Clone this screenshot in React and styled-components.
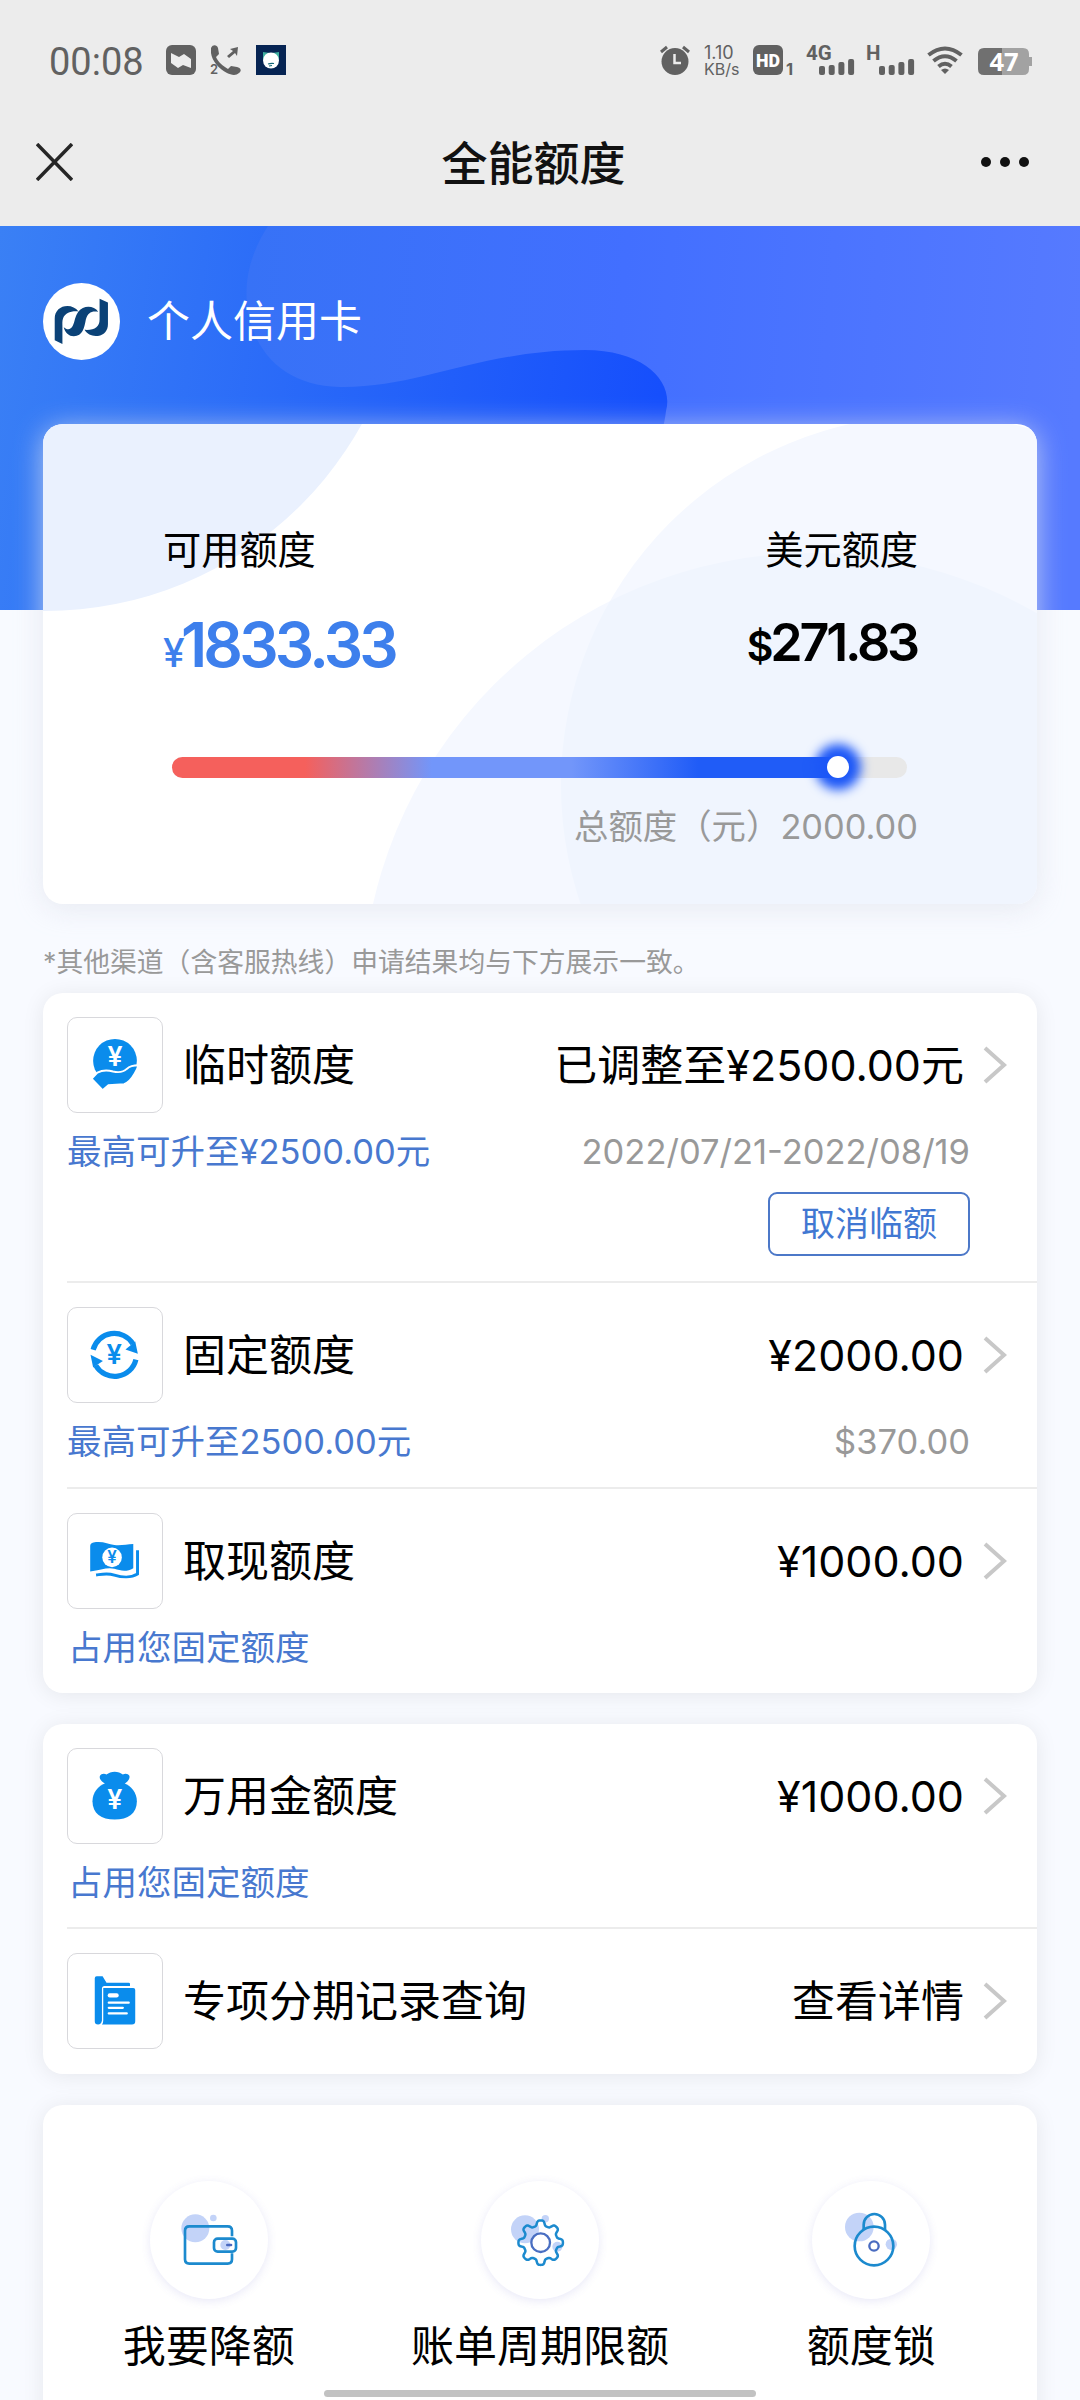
import React from 'react'
import styled, { createGlobalStyle } from 'styled-components'

const GlobalStyle = createGlobalStyle`
  * {
    box-sizing: border-box;
  }
  body {
    margin: 0;
    background: #f8faff;
    color: #000;
    font-family: Inter, "Noto Sans CJK SC", sans-serif;
  }
`

const Page = styled.div`
  position: relative;
  width: 1080px;
  height: 2400px;
  overflow: hidden;
  display: flex;
  flex-direction: column;
`

const TopBar = styled.header`
  height: 226px;
  flex: none;
  background: #ececec;
`

const StatusBar = styled.div`
  display: flex;
  justify-content: space-between;
  height: 98px;
  padding: 42px 48px 0 49px;
  color: #616161;
`

const StatusGroup = styled.div`
  display: flex;
  align-items: flex-start;
`

const Clock = styled.span`
  width: 117px;
  font: 38px/41px Roboto, sans-serif;
  white-space: nowrap;
`

const StatusIcon = styled.svg`
  display: block;
  flex: none;
  margin: 3px ${p => p.$gap || 0}px 0 0;
  overflow: visible;
`

const Speed = styled.div`
  width: 49px;
  padding-top: 2px;
  font-size: 18px;
  line-height: 17px;
`

const SpeedUnit = styled.div`
  font-size: 16px;
`

const NavBar = styled.div`
  display: grid;
  grid-template-columns: 1fr auto 1fr;
  align-items: center;
  height: 128px;
  padding: 0 51px 0 36px;
`

const NavTitle = styled.h1`
  margin: 0;
  padding: 2px 0 0 2px;
  font-size: 46px;
  font-weight: 500;
  line-height: 64px;
  color: #111;
`

const More = styled.div`
  display: flex;
  justify-content: flex-end;
  gap: 9px;

  i {
    width: 10px;
    height: 10px;
    border-radius: 50%;
    background: #111;
  }
`

const Hero = styled.section`
  position: relative;
  height: 384px;
  flex: none;
  padding: 57px 43px 0;
`

const HeroArt = styled.svg`
  position: absolute;
  inset: 0;
`

const Account = styled.div`
  position: relative;
  display: flex;
  align-items: center;
  gap: 27px;
  color: #fff;
  font-size: 43px;
  line-height: 77px;
`

const Main = styled.main`
  position: relative;
  display: flex;
  flex-direction: column;
  margin: -186px 43px 0;
`

const LimitCard = styled.section`
  position: relative;
  height: 480px;
  padding: 98px 119px 0 120px;
  border-radius: 20px;
  background: #fff;
  box-shadow: 0 4px 28px rgba(224, 228, 236, 0.75);
`

const CardArt = styled.svg`
  position: absolute;
  inset: 0;
  border-radius: 20px;
`

const Limits = styled.div`
  position: relative;
  display: flex;
  justify-content: space-between;
`

const Limit = styled.div`
  display: flex;
  flex-direction: column;
  align-items: ${p => (p.$end ? 'flex-end' : 'flex-start')};
`

const LimitLabel = styled.span`
  font-size: 38.2px;
  line-height: 57px;
`

const Amount = styled.strong`
  display: flex;
  align-items: baseline;
  height: 84px;
  margin: ${p => (p.$small ? '26px 1px 0 0' : '28px 0 0')};
  font-size: ${p => (p.$small ? 52 : 62)}px;
  font-weight: 600;
  line-height: 76px;
  letter-spacing: ${p => (p.$small ? -3.2 : -3.8)}px;
  color: ${p => (p.$small ? '#000' : '#3d7fec')};

  small {
    font-size: ${p => (p.$small ? 41 : 39)}px;
    font-weight: ${p => (p.$small ? 600 : 500)};
  }
`

const Track = styled.div`
  position: relative;
  width: 735px;
  height: 21px;
  margin: 66px 0 0 9px;
  border-radius: 11px;
  background: #e8e8e8;
`

const Fill = styled.div`
  height: 100%;
  border-radius: 11px 0 0 11px;
  background: linear-gradient(90deg, #f5605c 20%, #7296fa 39%, #7296fa 60%, #205cf7 79%);
`

const Knob = styled.i`
  position: absolute;
  top: -1px;
  width: 22px;
  height: 22px;
  margin-left: -11px;
  border-radius: 50%;
  background: #fff;
  box-shadow: 0 0 11px 12px #1c57f7;
`

const Total = styled.div`
  position: relative;
  margin-top: 23px;
  text-align: right;
  font-size: 34.4px;
  line-height: 52px;
  color: #999;
`

const Note = styled.p`
  margin: 38px 0 11px;
  font-size: 26.8px;
  line-height: 40px;
  color: #999;
  white-space: nowrap;
`

const Card = styled.section`
  margin-bottom: 31px;
  padding-left: 24px;
  border-radius: 20px;
  background: #fff;
  box-shadow: 0 2px 22px rgba(0, 0, 0, 0.08);
`

const Row = styled.div`
  padding: 24px 0 ${p => p.$bottom || 22}px;

  & + & {
    border-top: 2px solid #ececec;
  }
`

const RowMain = styled.div`
  display: flex;
  align-items: center;
  height: 96px;
  padding-right: 29px;
`

const IconBox = styled.svg`
  flex: none;
  border: 1px solid #d8d8dc;
  border-radius: 10px;
`

const RowTitle = styled.span`
  margin-left: 20px;
  font-size: 43px;
  line-height: 60px;
`

const RowValue = styled.span`
  margin: 0 19px 0 auto;
  font-size: 43px;
  line-height: 60px;
`

const RowSub = styled.div`
  display: flex;
  justify-content: space-between;
  padding: 16px 67px 0 ${p => (p.$indent ? 1 : 0)}px;
  font-size: 34.5px;
  line-height: 46px;
  color: #4878cf;

  span:last-child:not(:first-child) {
    color: #999;
  }
`

const OutlineButton = styled.button`
  display: block;
  width: 202px;
  height: 64px;
  margin: 17px 67px 0 auto;
  padding: 0 0 5px;
  border: 2px solid #4c78c8;
  border-radius: 9px;
  background: #fff;
  color: #4178d2;
  font: inherit;
  font-size: 34px;
`

const Actions = styled(Card)`
  display: grid;
  grid-template-columns: repeat(3, 1fr);
  height: 340px;
  padding: 76px 0 0;
`

const Action = styled.div`
  display: flex;
  flex-direction: column;
  align-items: center;
  gap: 17px;
  font-size: 43px;
  line-height: 60px;
`

const Round = styled.svg`
  border-radius: 50%;
  box-shadow: 0 2px 10px rgba(90, 90, 200, 0.14);
`

const HomeIndicator = styled.i`
  position: absolute;
  left: 324px;
  bottom: 3px;
  width: 432px;
  height: 7px;
  border-radius: 4px;
  background: #c2c2c2;
`

const BLUE = '#0a8cec'

const Yen = ({ x, y, size, fill = '#fff' }) => (
  <text x={x} y={y} fontSize={size} fontWeight="600" textAnchor="middle" fill={fill}>¥</text>
)

const icons = {
  hand: (
    <>
      <circle cx="144" cy="131" r="67" fill={BLUE} />
      <Yen x="144" y="147" size="82" />
      <path
        d="M72 186L90 167Q112 156 138 164Q166 170 180 156Q192 145 216 145Q212 158 204 171Q190 196 172 203L124 206L106 221Z"
        fill={BLUE}
        stroke="#fff"
        strokeWidth="6"
      />
    </>
  ),
  cycle: (
    <>
      <path d="M77 128A67 67 0 0 1 199 110" fill="none" stroke={BLUE} strokeWidth="16" />
      <path d="M208 158A67 67 0 0 1 85 176" fill="none" stroke={BLUE} strokeWidth="16" />
      <path d="M206 103L214 140L176 127Z M77 182L69 143L107 162Z" fill={BLUE} />
      <Yen x="142" y="173" size="84" fill={BLUE} />
    </>
  ),
  cash: (
    <>
      <path d="M68 98Q68 89 78 87C106 82 122 92 142 95S180 92 200 92V166C180 178 162 174 142 168S100 172 68 176Z" fill={BLUE} />
      <path d="M213 111V184C194 196 164 194 142 187S106 184 86 187" fill="none" stroke={BLUE} strokeWidth="9" />
      <circle cx="135" cy="133" r="30" fill="#fff" />
      <Yen x="135" y="151" size="52" fill={BLUE} />
    </>
  ),
  bag: (
    <>
      <path d="M118 110C104 100 94 92 98 82C101 75 112 74 118 78C124 74 134 70 143 70S162 74 168 78C176 74 185 76 188 82C191 92 182 100 170 110Z" fill={BLUE} />
      <path d="M116 104H170C194 112 211 134 211 160C211 198 184 216 143 216S75 198 75 160C75 134 92 112 116 104Z" fill={BLUE} />
      <Yen x="143" y="184" size="82" />
    </>
  ),
  folder: (
    <>
      <path d="M82 74Q82 68 88 68H106L118 88H186Q190 88 190 92V98H112Q104 98 104 106V204Q102 216 92 216Q82 216 82 206Z" fill={BLUE} />
      <path d="M108 104H200Q206 104 206 110V206Q206 216 196 216H104Q108 212 108 204Z" fill={BLUE} />
      <path d="M128 127H149" stroke="#fff" strokeWidth="13" strokeLinecap="round" />
      <path d="M125 149H186M125 165H168M125 182H180" stroke="#fff" strokeWidth="7" strokeLinecap="round" />
    </>
  ),
}

// eight soft teeth around the hub
const gearPath = (cx, cy) =>
  Array.from({ length: 160 }, (_, i) => {
    const a = (i / 160) * Math.PI * 2
    const r = 59 + 8 * Math.tanh(Math.cos(a * 8) * 2)
    return `${i ? 'L' : 'M'}${(cx + r * Math.sin(a)).toFixed(1)} ${(cy - r * Math.cos(a)).toFixed(1)}`
  }).join('') + 'Z'

const LINE = '#1c8ace'
const PALE = '#c3d3f8'

const actionIcons = {
  wallet: (
    <>
      <circle cx="136" cy="142" r="42" fill={PALE} />
      <circle cx="190" cy="111" r="10" fill={PALE} />
      <path d="M246 166V149Q246 136 233 136H118Q105 136 105 149V235Q105 248 118 248H233Q246 248 246 235V217" fill="none" stroke={LINE} strokeWidth="8" />
      <circle cx="226" cy="192" r="15" fill={PALE} />
      <rect x="192" y="173" width="66" height="39" rx="11" fill="none" stroke={LINE} strokeWidth="8" />
      <path d="M232 192H243" stroke="#4a68bf" strokeWidth="8" strokeLinecap="round" />
    </>
  ),
  gear: (
    <>
      <circle cx="132" cy="145" r="42" fill={PALE} />
      <circle cx="193" cy="113" r="11" fill={PALE} />
      <circle cx="229" cy="197" r="15" fill={PALE} />
      <path d={gearPath(179, 185)} fill="none" stroke={LINE} strokeWidth="7.500" strokeLinejoin="round" />
      <circle cx="179" cy="185" r="28" fill="#fff" stroke="#4a6fc2" strokeWidth="7" />
    </>
  ),
  lock: (
    <>
      <circle cx="142" cy="138" r="43" fill={PALE} />
      <circle cx="238" cy="190" r="17" fill={PALE} />
      <path d="M155 147V131A32 32 0 0 1 219 131V147" fill="none" stroke={LINE} strokeWidth="8" />
      <circle cx="186" cy="195" r="58" fill="none" stroke={LINE} strokeWidth="8" />
      <circle cx="186" cy="195" r="14" fill="#fff" stroke="#4a6cc0" strokeWidth="7" />
    </>
  ),
}

const Bars = ({ label, width }) => (
  <StatusIcon width={width} height="30" $gap={13} fill="currentColor">
    <text x="-1" y="15" fontFamily="Roboto" fontSize="20.500" fontWeight="700">{label}</text>
    {[9, 10, 13, 16].map((h, i) => (
      <rect key={i} x={width - 35 + i * 9.7} y={30 - h} width="6" height={h} rx="2" />
    ))}
  </StatusIcon>
)

const Chevron = () => (
  <svg width="25" height="38" fill="none" stroke="#c8c8c8" strokeWidth="4">
    <path d="M2 2L21 19L2 36" />
  </svg>
)

const Item = ({ icon, title, value, sub, extra, indent, bottom, children }) => (
  <Row $bottom={bottom}>
    <RowMain>
      <IconBox width="96" height="96" viewBox="0 0 288 288">{icons[icon]}</IconBox>
      <RowTitle>{title}</RowTitle>
      <RowValue>{value}</RowValue>
      <Chevron />
    </RowMain>
    {sub && (
      <RowSub $indent={indent}>
        <span>{sub}</span>
        {extra && <span>{extra}</span>}
      </RowSub>
    )}
    {children}
  </Row>
)

const Status = () => (
  <StatusBar>
    <StatusGroup>
      <Clock>00:08</Clock>
      <StatusIcon width="30" height="30" $gap={14}>
        <rect width="30" height="30" rx="6" fill="#616161" />
        <path d="M5 8L13 12L18 9L25 14V23L17 20L12 23L5 18Z" fill="#ececec" />
      </StatusIcon>
      <StatusIcon width="31" height="30" $gap={15} fill="currentColor">
        <path d="M1 3C3 -1 7 0 8 3L9 9L6 12C8 17 13 21 18 24L21 21L27 22C31 23 32 26 29 28C26 31 21 30 17 28C9 24 2 16 1 8Z" />
        <path d="M17 11L23 6L20 4L28 2L27 11L25 8L19 13Z" />
        <text x="0" y="29" fontSize="13" fontWeight="600">2</text>
      </StatusIcon>
      <StatusIcon width="30" height="30">
        <rect width="30" height="30" fill="#062453" />
        <path d="M7 7L14 8L10 14L7 15ZM23 7L16 8L20 14L23 15Z" fill="#3fae9f" />
        <circle cx="15" cy="15.500" r="8" fill="#fff" />
        <path d="M12 19Q15 18 18 18.500M13 21L16 20.500" stroke="#167" strokeWidth="1.200" fill="none" />
      </StatusIcon>
    </StatusGroup>
    <StatusGroup>
      <StatusIcon width="30" height="30" $gap={14}>
        <circle cx="15" cy="16.500" r="13.500" fill="#616161" />
        <path d="M1 7L7 2M29 7L23 2" stroke="#616161" strokeWidth="3" />
        <path d="M14.500 9V18H21" fill="none" stroke="#ececec" strokeWidth="2.500" />
      </StatusIcon>
      <Speed>
        1.10
        <SpeedUnit>KB/s</SpeedUnit>
      </Speed>
      <StatusIcon width="41" height="30" $gap={13}>
        <rect width="30" height="30" rx="6" fill="#616161" />
        <text x="15" y="22" fontFamily="Roboto" fontSize="19" fontWeight="900" fill="#fff" textAnchor="middle" textLength="24" lengthAdjust="spacingAndGlyphs">HD</text>
        <text x="33" y="30" fontSize="16.500" fontWeight="700" fill="#616161">1</text>
      </StatusIcon>
      <Bars label="4G" width={47} />
      <Bars label="H" width={47} />
      <StatusIcon width="36" height="30" $gap={15} fill="none" stroke="currentColor" strokeWidth="4">
        <path d="M1.500 10Q18 -3 34.500 10M6.500 16Q18 6.500 29.500 16M11.500 21.500Q18 16 24.500 21.500" />
        <path d="M14 25Q18 22 22 25L18 29Z" fill="currentColor" stroke="none" />
      </StatusIcon>
      <StatusIcon width="54" height="30">
        <path d="M24 3H45Q51 3 51 9V12H54V21H51V24Q51 30 45 30H24Z" fill="#a2a2a2" />
        <path d="M24 3H6Q0 3 0 9V24Q0 30 6 30H24Z" fill="#707070" />
        <text x="26" y="26" fontFamily="Open Sans" fontSize="25.500" fontWeight="700" fill="#fff" textAnchor="middle">47</text>
      </StatusIcon>
    </StatusGroup>
  </StatusBar>
)

const Logo = () => (
  <svg width="77" height="77" viewBox="130 71 230 230">
    <circle cx="245" cy="186" r="115" fill="#fff" />
    <g fill="#0b4277">
      <path d="M165 242V178C165 154 182 140 203 140C216 140 228 146 236 156C212 154 196 162 190 176C187 184 188 192 188 200V253Z" />
      <path d="M192 203C202 212 213 211 219 199C225 187 225 171 236 156C250 137 282 137 295 157C276 153 263 160 258 180C253 206 249 229 222 230C207 230 196 219 192 203Z" />
      <path d="M254 211C263 226 278 231 294 229C314 226 324 212 324 194V129L299 118V180C299 202 284 213 254 211Z" />
    </g>
  </svg>
)

export default () => (
  <>
    <GlobalStyle />
    <Page>
      <TopBar>
        <Status />
        <NavBar>
          <svg width="37" height="38" stroke="#262626" strokeWidth="3.500">
            <path d="M1 1L36 37M36 1L1 37" />
          </svg>
          <NavTitle>全能额度</NavTitle>
          <More><i /><i /><i /></More>
        </NavBar>
      </TopBar>
      <Hero>
        <HeroArt width="1080" height="384">
          <defs>
            <linearGradient id="base" gradientUnits="userSpaceOnUse" x1="0" y1="0" x2="670" y2="100">
              <stop offset="0" stopColor="#3a80f5" />
              <stop offset="1" stopColor="#164ffc" />
            </linearGradient>
            <linearGradient id="wave" gradientUnits="userSpaceOnUse" x1="246" y1="60" x2="1080" y2="120">
              <stop offset="0" stopColor="#3772f6" />
              <stop offset="0.450" stopColor="#426fff" />
              <stop offset="1" stopColor="#567aff" />
            </linearGradient>
          </defs>
          <rect width="1080" height="384" fill="url(#base)" />
          <path d="M268 0C250 28 242 58 249 90C258 132 290 160 340 161C420 162 480 124 585 124C645 124 674 156 666 185Q664 205 650 240V384H1080V0Z" fill="url(#wave)" />
        </HeroArt>
        <Account>
          <Logo />
          个人信用卡
        </Account>
      </Hero>
      <Main>
        <LimitCard>
          <CardArt width="994" height="480">
            <defs>
              <clipPath id="overlap">
                <circle cx="888" cy="361" r="370" />
              </clipPath>
            </defs>
            <circle cx="2" cy="-175" r="362" fill="#eaf1fe" />
            <circle cx="888" cy="361" r="370" fill="#f5f8ff" />
            <circle cx="769" cy="579" r="450" fill="#f5f8ff" />
            <circle cx="769" cy="579" r="450" fill="#f0f5fe" clipPath="url(#overlap)" />
          </CardArt>
          <Limits>
            <Limit>
              <LimitLabel>可用额度</LimitLabel>
              <Amount><small>¥</small>1833.33</Amount>
            </Limit>
            <Limit $end>
              <LimitLabel>美元额度</LimitLabel>
              <Amount $small><small>$</small>271.83</Amount>
            </Limit>
          </Limits>
          <Track>
            <Fill style={{ width: `${(1833.33 / 2000) * 98.9}%` }} />
            <Knob style={{ left: `${(1833.33 / 2000) * 98.9}%` }} />
          </Track>
          <Total>总额度（元）2000.00</Total>
        </LimitCard>
        <Note>*其他渠道（含客服热线）申请结果均与下方展示一致。</Note>
        <Card>
          <Item
            icon="hand"
            title="临时额度"
            value="已调整至¥2500.00元"
            sub="最高可升至¥2500.00元"
            extra="2022/07/21-2022/08/19"
            bottom={25}
          >
            <OutlineButton>取消临额</OutlineButton>
          </Item>
          <Item icon="cycle" title="固定额度" value="¥2000.00" sub="最高可升至2500.00元" extra="$370.00" />
          <Item icon="cash" title="取现额度" value="¥1000.00" sub="占用您固定额度" indent />
        </Card>
        <Card>
          <Item icon="bag" title="万用金额度" value="¥1000.00" sub="占用您固定额度" indent bottom={21} />
          <Item icon="folder" title="专项分期记录查询" value="查看详情" bottom={25} />
        </Card>
        <Actions>
          <Action>
            <Round width="118" height="118" viewBox="0 0 354 354">{actionIcons.wallet}</Round>
            我要降额
          </Action>
          <Action>
            <Round width="118" height="118" viewBox="0 0 354 354">{actionIcons.gear}</Round>
            账单周期限额
          </Action>
          <Action>
            <Round width="118" height="118" viewBox="0 0 354 354">{actionIcons.lock}</Round>
            额度锁
          </Action>
        </Actions>
      </Main>
      <HomeIndicator />
    </Page>
  </>
)
